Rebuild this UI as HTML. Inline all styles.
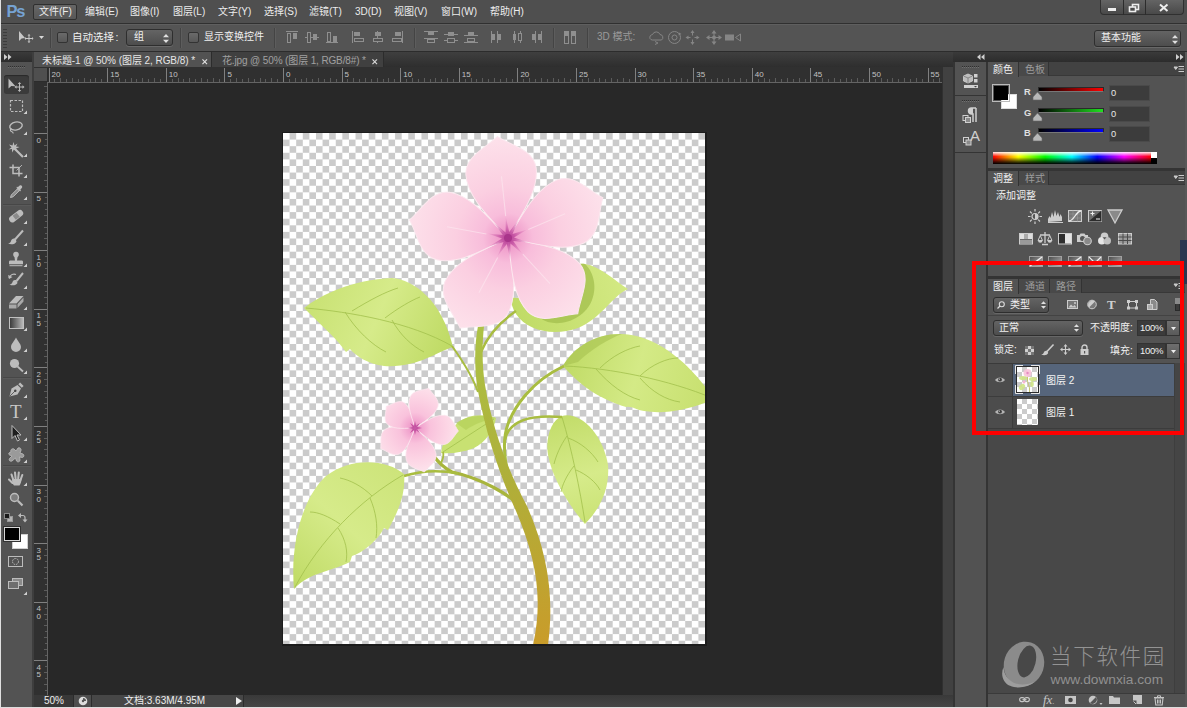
<!DOCTYPE html>
<html lang="zh-CN">
<head>
<meta charset="utf-8">
<title>Photoshop</title>
<style>
*{box-sizing:border-box;margin:0;padding:0}
html,body{width:1187px;height:708px;overflow:hidden;background:#535353}
body{position:relative;font-family:"Liberation Sans","Noto Sans CJK SC",sans-serif;font-size:10px;color:#e4e4e4;line-height:1}
.a{position:absolute}
.t{position:absolute;white-space:nowrap;line-height:12px;height:12px}
svg{position:absolute;overflow:visible}
#menubar{left:0;top:0;width:1187px;height:23px;background:#4f4f4f}
#menuline{left:0;top:23px;width:1187px;height:1px;background:#303030}
#optbar{left:0;top:24px;width:1187px;height:28px;background:#545454;border-top:1px solid #5f5f5f;border-bottom:1px solid #2c2c2c}
.menu{top:6px;font-size:10px;color:#ececec}
.dd{background:linear-gradient(#646464,#4d4d4d);border:1px solid #2e2e2e;border-radius:3px;box-shadow:0 1px 0 rgba(255,255,255,.12)}
.cb{width:11px;height:11px;background:linear-gradient(#6a6a6a,#585858);border:1px solid #333;border-radius:2px}
.vsep{width:2px;height:20px;top:28px;background:#444;border-right:1px solid #5d5d5d}
.dark{background:#3a3a3a}
</style>
</head>
<body>
<div class="a" id="menubar"></div><div class="a" id="menuline"></div>
<div class="t" style="left:6.500px;top:1px;font-size:16.500px;line-height:20px;height:20px;font-weight:bold;color:#76a3d3;letter-spacing:-1.200px">Ps</div>
<div class="a" style="left:33px;top:4px;width:44px;height:16px;background:linear-gradient(#666,#575757);border:1px solid #2f2f2f;border-radius:2px"></div>
<div class="t menu" style="left:39px">文件(F)</div>
<div class="t menu" style="left:85px">编辑(E)</div>
<div class="t menu" style="left:130px">图像(I)</div>
<div class="t menu" style="left:173px">图层(L)</div>
<div class="t menu" style="left:218px">文字(Y)</div>
<div class="t menu" style="left:264px">选择(S)</div>
<div class="t menu" style="left:309px">滤镜(T)</div>
<div class="t menu" style="left:355px">3D(D)</div>
<div class="t menu" style="left:394px">视图(V)</div>
<div class="t menu" style="left:441px">窗口(W)</div>
<div class="t menu" style="left:490px">帮助(H)</div>
<div class="a" style="left:1100px;top:0;width:84px;height:15px;background:linear-gradient(#646464,#494949);border:1px solid #303030;border-top:none;border-radius:0 0 4px 4px"></div>
<div class="a" style="left:1123px;top:0;width:1px;height:15px;background:#2c2c2c"></div>
<div class="a" style="left:1145px;top:0;width:1px;height:15px;background:#2c2c2c"></div>
<svg style="left:1100px;top:0" width="84" height="15" viewBox="0 0 84 15"><rect x="8" y="8" width="8" height="3" fill="#eee"/><rect x="32.5" y="4.5" width="6" height="5" fill="none" stroke="#eee" stroke-width="1.6"/><rect x="29.5" y="7" width="6" height="4.5" fill="#4b4b4b" stroke="#eee" stroke-width="1.6"/><path d="M60 4.5l7.5 6.5M67.5 4.5l-7.5 6.5" stroke="#eee" stroke-width="2"/></svg>
<div class="a" id="optbar"></div>
<div class="a" style="left:3px;top:29px;width:4px;height:19px;background:repeating-linear-gradient(#3c3c3c 0 1px,transparent 1px 3px)"></div>
<svg style="left:18px;top:31px" width="30" height="14" viewBox="0 0 30 14"><path d="M1 0v10l2.600-2.600L7 7z" fill="#c8c8c8"/><path d="M11 4v7M7.500 7.500h7" stroke="#c8c8c8" stroke-width="1"/><path d="M11 3l1.500 1.500h-3zM11 12l1.500-1.500h-3zM6.500 7.500L8 6v3zM15.500 7.500L14 6v3z" fill="#c8c8c8"/><path d="M21 5h5l-2.500 3z" fill="#d8d8d8"/></svg>
<div class="a vsep" style="left:50px"></div>
<div class="a cb" style="left:57px;top:32px"></div>
<div class="t" style="left:72px;top:31px;font-size:10.500px;color:#f0f0f0">自动选择<span style="margin-left:1.500px">:</span></div>
<div class="a dd" style="left:126px;top:29px;width:47px;height:17px"></div>
<div class="t" style="left:134px;top:31px;color:#f0f0f0">组</div>
<svg style="left:163px;top:34px" width="6" height="9" viewBox="0 0 6 9"><path d="M0 3.200L3 0l3 3.200zM0 5.800L3 9l3-3.200z" fill="#e0e0e0"/></svg>
<div class="a vsep" style="left:180px"></div>
<div class="a cb" style="left:188px;top:32px"></div>
<div class="t" style="left:204px;top:31px;color:#f0f0f0">显示变换控件</div>
<div class="a vsep" style="left:274px"></div>
<svg style="left:286px;top:31px" width="14" height="13" viewBox="0 0 14 13" shape-rendering="crispEdges"><path d="M0 .5h12" stroke="#8f8f8f"/><rect x="1.5" y="2.5" width="3" height="9" fill="none" stroke="#8f8f8f"/><rect x="7" y="2" width="4" height="6" fill="#8f8f8f"/></svg>
<svg style="left:305px;top:31px" width="14" height="13" viewBox="0 0 14 13" shape-rendering="crispEdges"><path d="M0 6h14" stroke="#8f8f8f"/><rect x="2.5" y="1.5" width="3" height="10" fill="#535353" stroke="#8f8f8f"/><rect x="8" y="3" width="4" height="6" fill="#8f8f8f"/></svg>
<svg style="left:326px;top:31px" width="14" height="13" viewBox="0 0 14 13" shape-rendering="crispEdges"><path d="M0 11.5h12" stroke="#8f8f8f"/><rect x="1.5" y="1.5" width="3" height="9" fill="none" stroke="#8f8f8f"/><rect x="7" y="5" width="4" height="6" fill="#8f8f8f"/></svg>
<svg style="left:352px;top:31px" width="14" height="13" viewBox="0 0 14 13" shape-rendering="crispEdges"><path d="M.5 0v12" stroke="#8f8f8f"/><rect x="2" y="1" width="6" height="4" fill="#8f8f8f"/><rect x="2.5" y="7.5" width="9" height="3" fill="none" stroke="#8f8f8f"/></svg>
<svg style="left:372px;top:31px" width="14" height="13" viewBox="0 0 14 13" shape-rendering="crispEdges"><path d="M5.5 0v12" stroke="#8f8f8f"/><rect x="2.5" y="1" width="6" height="4" fill="#8f8f8f"/><rect x="1" y="7.5" width="9" height="3" fill="#535353" stroke="#8f8f8f"/></svg>
<svg style="left:391px;top:31px" width="14" height="13" viewBox="0 0 14 13" shape-rendering="crispEdges"><path d="M11.5 0v12" stroke="#8f8f8f"/><rect x="4" y="1" width="6" height="4" fill="#8f8f8f"/><rect x="1.5" y="7.5" width="9" height="3" fill="none" stroke="#8f8f8f"/></svg>
<svg style="left:424px;top:31px" width="14" height="13" viewBox="0 0 14 13" shape-rendering="crispEdges"><path d="M0 .5h14M0 7.5h14" stroke="#8f8f8f"/><rect x="4" y="1" width="6" height="3" fill="#8f8f8f"/><rect x="3.5" y="8.500" width="7" height="3" fill="none" stroke="#8f8f8f"/></svg>
<svg style="left:444px;top:31px" width="14" height="13" viewBox="0 0 14 13" shape-rendering="crispEdges"><path d="M0 3h14M0 9.500h14" stroke="#8f8f8f"/><rect x="4" y="1" width="6" height="4" fill="#8f8f8f"/><rect x="3.5" y="7.5" width="7" height="4" fill="#535353" stroke="#8f8f8f"/></svg>
<svg style="left:464px;top:31px" width="14" height="13" viewBox="0 0 14 13" shape-rendering="crispEdges"><path d="M0 4.5h14M0 11.5h14" stroke="#8f8f8f"/><rect x="4" y="1" width="6" height="3" fill="#8f8f8f"/><rect x="3.5" y="7.5" width="7" height="3" fill="none" stroke="#8f8f8f"/></svg>
<svg style="left:491px;top:31px" width="14" height="13" viewBox="0 0 14 13" shape-rendering="crispEdges"><path d="M.5 0v12M6.500 0v12" stroke="#8f8f8f"/><rect x="1" y="3" width="3" height="6" fill="#8f8f8f"/><rect x="7" y="3" width="3" height="6" fill="#8f8f8f"/></svg>
<svg style="left:511px;top:31px" width="14" height="13" viewBox="0 0 14 13" shape-rendering="crispEdges"><path d="M3 0v12M9 0v12" stroke="#8f8f8f"/><rect x="1.500" y="3" width="3" height="6" fill="#8f8f8f"/><rect x="7.500" y="2.500" width="3" height="7" fill="#535353" stroke="#8f8f8f"/></svg>
<svg style="left:531px;top:31px" width="14" height="13" viewBox="0 0 14 13" shape-rendering="crispEdges"><path d="M4.500 0v12M10.500 0v12" stroke="#8f8f8f"/><rect x="1" y="3" width="3" height="6" fill="#8f8f8f"/><rect x="7" y="3" width="3" height="6" fill="#8f8f8f"/></svg>
<svg style="left:564px;top:31px" width="14" height="13" viewBox="0 0 14 13" shape-rendering="crispEdges"><rect x=".5" y=".5" width="4" height="12" fill="none" stroke="#8f8f8f"/><rect x="7.500" y=".5" width="4" height="12" fill="none" stroke="#8f8f8f"/><rect x="1" y="1" width="3" height="4" fill="#8f8f8f"/><rect x="8" y="1" width="3" height="4" fill="#8f8f8f"/></svg>
<div class="a vsep" style="left:414px"></div>
<div class="a vsep" style="left:553px"></div>
<div class="a vsep" style="left:587px"></div>
<div class="t" style="left:597px;top:31px;color:#9a9a9a">3D 模式:</div>
<svg style="left:648px;top:30px" width="96" height="15" viewBox="0 0 96 15" fill="none" stroke="#858585" stroke-width="1"><path d="M2 8.500a3 3 0 0 1 2.500-4a4 4 0 0 1 7.500 0a3 3 0 0 1 1.500 5.500h-9a3 3 0 0 1-2.500-1.500z"/><path d="M7 11.500l3 1.500-3 1.500"/><circle cx="26.500" cy="7.500" r="6"/><circle cx="26.500" cy="7.500" r="2.500"/><path d="M31 2.500l2.500 1.500-3 1.500z" fill="#858585" stroke="none"/><path d="M44.500 2.500v3M44.500 9.500v3M39.500 7.500h3M46.500 7.500h3" /><path d="M44.500 0l2 3h-4zM44.500 15l2-3h-4zM37.500 7.500l3-2v4zM51.500 7.500l-3-2v4z" fill="#858585" stroke="none"/><path d="M66 2v11M60 7.500h12"/><path d="M66 0l2.500 3.500h-5zM66 15l2.500-3.500h-5zM58 7.500l3.500-2.500v5zM74 7.500l-3.500-2.500v5z" fill="#858585" stroke="none"/><circle cx="66" cy="7.500" r="2" fill="#858585" stroke="none"/><rect x="77" y="4.500" width="9" height="6" fill="#858585" stroke="none"/><path d="M87.500 7.500l5-3.500v7z"/></svg>
<div class="a dd" style="left:1094px;top:30px;width:87px;height:17px"></div>
<div class="t" style="left:1101px;top:32px;color:#f0f0f0">基本功能</div>
<svg style="left:1172px;top:35px" width="6" height="9" viewBox="0 0 6 9"><path d="M0 3.200L3 0l3 3.200zM0 5.800L3 9l3-3.200z" fill="#e0e0e0"/></svg>
<div class="a" style="left:34px;top:52px;width:919px;height:15px;background:linear-gradient(#3f3f3f,#2e2e2e)"></div>
<div class="a" style="left:34px;top:52px;width:178px;height:16px;background:#525252;border-right:1px solid #2c2c2c"></div>
<div class="a" style="left:212px;top:52px;width:172px;height:15px;background:#404040;border-right:1px solid #2c2c2c"></div>
<div class="t" style="left:42px;top:55px;font-size:10px;letter-spacing:-.06px;color:#e6e6e6">未标题-1 @ 50% (图层 2, RGB/8) *</div>
<div class="t" style="left:222px;top:55px;font-size:10px;letter-spacing:-.13px;color:#a0a0a0">花.jpg @ 50% (图层 1, RGB/8#) *</div>
<svg style="left:202px;top:58.500px" width="5.500" height="5.500" viewBox="0 0 6 6"><path d="M.5.5l5 5M5.500.5l-5 5" stroke="#e0e0e0" stroke-width="1.250"/></svg>
<svg style="left:372px;top:58.500px" width="5.500" height="5.500" viewBox="0 0 6 6"><path d="M.5.5l5 5M5.500.5l-5 5" stroke="#d8d8d8" stroke-width="1.250"/></svg>
<div class="a" style="left:48px;top:82px;width:894px;height:613px;background:#282828"></div>
<div class="a" style="left:942px;top:67px;width:11px;height:641px;background:#414141;border-left:1px solid #303030"></div>
<svg style="left:0;top:0" width="1187" height="708" viewBox="0 0 1187 708">
<defs>
<pattern id="chk" x="283" y="133" width="13.1875" height="13.1875" patternUnits="userSpaceOnUse"><rect width="13.1875" height="13.1875" fill="#fff"/><rect x="6.59" width="6.6" height="6.59" fill="#cbcbcb"/><rect y="6.59" width="6.59" height="6.6" fill="#cbcbcb"/></pattern>
<clipPath id="cv"><rect x="283" y="133" width="422" height="511"/></clipPath>
<radialGradient id="pg" gradientUnits="userSpaceOnUse" cx="0" cy="0" r="104"><stop offset="0" stop-color="#d970b4"/><stop offset=".08" stop-color="#ef9bca"/><stop offset=".24" stop-color="#f8bddb"/><stop offset=".5" stop-color="#fbcfe1"/><stop offset="1" stop-color="#fde2eb"/></radialGradient>
<radialGradient id="pg2" gradientUnits="userSpaceOnUse" cx="0" cy="0" r="44"><stop offset="0" stop-color="#dc78b8"/><stop offset=".12" stop-color="#f09fcc"/><stop offset=".35" stop-color="#f9c2dc"/><stop offset=".7" stop-color="#fcd4e4"/><stop offset="1" stop-color="#fde3ec"/></radialGradient>
<radialGradient id="star" gradientUnits="userSpaceOnUse" cx="508" cy="238" r="21"><stop offset="0" stop-color="#b03a92"/><stop offset=".35" stop-color="#c655a4" stop-opacity=".9"/><stop offset="1" stop-color="#e58cc2" stop-opacity=".25"/></radialGradient>
<linearGradient id="stem" gradientUnits="userSpaceOnUse" x1="0" y1="330" x2="0" y2="644"><stop offset="0" stop-color="#adc246"/><stop offset=".45" stop-color="#aeb03a"/><stop offset="1" stop-color="#c99c2a"/></linearGradient>
<linearGradient id="lf1" gradientUnits="userSpaceOnUse" x1="304" y1="300" x2="440" y2="360"><stop offset="0" stop-color="#c8e172"/><stop offset=".5" stop-color="#d6eb8a"/><stop offset="1" stop-color="#c0db66"/></linearGradient>
<linearGradient id="lf2" gradientUnits="userSpaceOnUse" x1="515" y1="320" x2="625" y2="285"><stop offset="0" stop-color="#c0db66"/><stop offset="1" stop-color="#d3e983"/></linearGradient>
<linearGradient id="lf3" gradientUnits="userSpaceOnUse" x1="565" y1="360" x2="705" y2="400"><stop offset="0" stop-color="#c0db66"/><stop offset=".5" stop-color="#d4ea86"/><stop offset="1" stop-color="#c8e070"/></linearGradient>
<linearGradient id="lf4" gradientUnits="userSpaceOnUse" x1="560" y1="415" x2="590" y2="520"><stop offset="0" stop-color="#c2dc69"/><stop offset=".6" stop-color="#d6eb8a"/><stop offset="1" stop-color="#cbe376"/></linearGradient>
<linearGradient id="lf6" gradientUnits="userSpaceOnUse" x1="400" y1="470" x2="295" y2="585"><stop offset="0" stop-color="#cde47a"/><stop offset=".5" stop-color="#d6eb8a"/><stop offset="1" stop-color="#c0db66"/></linearGradient>
</defs>
<rect x="282" y="132" width="425" height="514" fill="#1c1c1c"/>
<rect x="283" y="133" width="422" height="511" fill="url(#chk)" shape-rendering="crispEdges"/>
<g clip-path="url(#cv)">
<path d="M511,299 C514,296 518,300 524,296 C536,280 560,262 585,264 C600,266 615,281 628,289 C612,296 602,318 578,328 C555,336 528,332 516,314 C513,309 511,304 511,299Z" fill="url(#lf2)"/>
<path d="M540,318 C556,330 585,320 592,300 C598,285 592,270 585,264 C570,262 552,276 540,290Z" fill="#a3bf4e" opacity=".75"/>
<path d="M304,308 C322,294 352,280 392,278 C414,280 442,300 453,347 C436,352 418,368 384,366 C368,364 356,356 350,349 L346,352 C338,340 322,326 304,308Z" fill="url(#lf1)"/>
<path d="M306,308 C350,312 410,322 452,346 M352,311 C370,300 385,292 398,288 M385,318 C398,308 412,300 420,297 M345,312 C356,330 372,345 386,352 M392,320 C400,335 412,346 424,352" stroke="#a2c04c" stroke-width="1" fill="none" opacity=".8"/>
<path d="M563,366 C574,346 598,333 622,334 C660,336 692,366 714,399 C694,408 668,415 644,411 C636,410 632,406 626,407 C604,400 584,390 563,366Z" fill="url(#lf3)"/>
<path d="M563,366 C574,346 598,333 622,334 C610,338 590,350 578,362Z" fill="#a6c250" opacity=".6"/>
<path d="M565,366 C610,368 670,380 712,398 M600,368 C612,356 628,348 640,346 M640,376 C652,364 668,358 678,358 M596,369 C610,385 625,396 640,400 M640,378 C652,392 666,400 680,402" stroke="#a2c04c" stroke-width="1" fill="none" opacity=".8"/>
<path d="M562,416 C580,411 603,434 608,465 C610,490 599,510 585,524 C574,512 553,482 548,455 C545,436 552,420 562,416Z" fill="url(#lf4)"/>
<path d="M562,417 C572,450 580,490 585,522 M567,436 C560,446 556,456 554,464 M574,466 C566,476 562,486 561,492 M568,438 C580,442 592,452 598,462 M576,470 C586,474 596,482 600,490" stroke="#a2c04c" stroke-width="1" fill="none" opacity=".8"/>
<path d="M441,453 C443,438 452,424 466,418 C476,414 488,415 496,418 C494,430 486,442 474,448 C464,452 452,454 441,453Z" fill="#c8e172"/><path d="M456,423 C466,416 482,414 496,418 C486,420 474,424 466,430Z" fill="#b3d058" opacity=".7"/>
<path d="M443,452 C460,441 478,429 494,419" stroke="#a2c04c" stroke-width="1" fill="none" opacity=".8"/>
<path d="M404,474 C388,460 352,456 326,476 C302,498 290,545 294,589 C310,572 330,572 350,562 L352,556 C364,552 378,540 384,528 L388,530 C398,512 406,494 404,474Z" fill="url(#lf6)"/>
<path d="M403,475 C360,500 320,540 295,587 M372,496 C362,486 350,480 340,478 M340,524 C328,516 318,512 310,512 M370,498 C376,512 378,526 376,538 M338,528 C346,540 348,552 346,562" stroke="#a2c04c" stroke-width="1" fill="none" opacity=".8"/>
<path d="M510,482 C504,460 502,440 508,424 C514,408 530,382 564,366" stroke="#a9bd40" stroke-width="3" fill="none"/>
<path d="M505,440 C508,424 524,414 562,417" stroke="#a9bd40" stroke-width="2.500" fill="none"/>
<path d="M524,510 C510,494 480,478 452,472 C444,468 438,462 433,455" stroke="#a8b53c" stroke-width="3.200" fill="none"/>
<path d="M458,473.500 C440,470 420,471 404,476" stroke="#a9bd40" stroke-width="2.500" fill="none"/>
<path d="M441,463 C443,459 444,455 443,452" stroke="#a9bd40" stroke-width="1.800" fill="none"/>
<path d="M481,352 C488,335 500,322 516,311" stroke="#a9bd40" stroke-width="2.500" fill="none"/>
<path d="M452,346 C462,360 472,375 478,392" stroke="#a9bd40" stroke-width="2" fill="none"/>
<path d="M533,645 C543,600 537,560 516,511 C501,478 486,436 477,386 C474,362 475,342 478,326 L484,326 C482,345 482,366 485,385 C493,432 509,472 527,506 C549,556 554,600 548,645Z" fill="url(#stem)"/>
<path transform="translate(508,238) rotate(-152)" d="M0,0 C-12.6,-18.4 -36.0,-42.8 -35.3,-67.3 C-34.2,-85.7 -12.6,-91.8 0,-102.0 C12.6,-91.8 34.2,-85.7 35.3,-67.3 C36.0,-42.8 12.6,-18.4 0,0Z" fill="url(#pg)" stroke="#fce8ef" stroke-width="1"/>
<path transform="translate(508,238) rotate(137.4)" d="M0,0 C-12.6,-18.5 -36.0,-43.3 -35.3,-68.0 C-34.2,-86.5 -12.6,-92.7 0,-103.0 C12.6,-92.7 34.2,-86.5 35.3,-68.0 C36.0,-43.3 12.6,-18.5 0,0Z" fill="url(#pg)" stroke="#fce8ef" stroke-width="1"/>
<path transform="translate(508,238) rotate(-79.6)" d="M0,0 C-12.2,-18.0 -35.0,-42.0 -34.3,-66.0 C-33.2,-84.0 -12.2,-90.0 0,-100.0 C12.2,-90.0 33.2,-84.0 34.3,-66.0 C35.0,-42.0 12.2,-18.0 0,0Z" fill="url(#pg)" stroke="#fce8ef" stroke-width="1"/>
<path transform="translate(508,238) rotate(67)" d="M0,0 C-12.2,-18.5 -35.0,-43.3 -34.3,-68.0 C-33.2,-86.5 -12.2,-92.7 0,-103.0 C12.2,-92.7 33.2,-86.5 34.3,-68.0 C35.0,-43.3 12.2,-18.5 0,0Z" fill="url(#pg)" stroke="#fce8ef" stroke-width="1"/>
<path transform="translate(508,238) rotate(-6)" d="M0,0 C-12.6,-18.4 -36.0,-42.8 -35.3,-67.3 C-34.2,-85.7 -12.6,-91.8 0,-102.0 C12.6,-91.8 34.2,-85.7 35.3,-67.3 C36.0,-42.8 12.6,-18.4 0,0Z" fill="url(#pg)" stroke="#fce8ef" stroke-width="1"/>
<path d="M497.7,257.4L478.9,292.7" stroke="#fdeaf1" stroke-width="1.100" opacity=".6"/>
<path d="M522.9,254.2L550.0,283.6" stroke="#fdeaf1" stroke-width="1.100" opacity=".6"/>
<path d="M486.4,234.0L447.0,226.8" stroke="#fdeaf1" stroke-width="1.100" opacity=".6"/>
<path d="M528.3,229.4L565.1,213.8" stroke="#fdeaf1" stroke-width="1.100" opacity=".6"/>
<path d="M505.7,216.1L501.5,176.3" stroke="#fdeaf1" stroke-width="1.100" opacity=".6"/>
<polygon points="505.8,217.1 509.2,232.1 518.5,219.8 512.5,234.0 527.2,229.5 514.0,237.4 528.5,242.4 513.2,241.0 522.1,253.6 510.4,243.5 510.2,258.9 506.8,243.9 497.5,256.2 503.5,242.0 488.8,246.5 502.0,238.6 487.5,233.6 502.8,235.0 493.9,222.4 505.6,232.5" fill="url(#star)"/>
<circle cx="508" cy="238" r="4" fill="#a9358b"/>
<path transform="translate(415,428) rotate(168)" d="M0,0 C-5.4,-8.1 -15.5,-18.9 -15.2,-29.7 C-14.7,-37.8 -5.4,-40.5 0,-45.0 C5.4,-40.5 14.7,-37.8 15.2,-29.7 C15.5,-18.9 5.4,-8.1 0,0Z" fill="url(#pg2)" stroke="#fce8ef" stroke-width=".7"/>
<path transform="translate(415,428) rotate(239)" d="M0,0 C-5.1,-7.2 -14.5,-16.8 -14.2,-26.4 C-13.8,-33.6 -5.1,-36.0 0,-40.0 C5.1,-36.0 13.8,-33.6 14.2,-26.4 C14.5,-16.8 5.1,-7.2 0,0Z" fill="url(#pg2)" stroke="#fce8ef" stroke-width=".7"/>
<path transform="translate(415,428) rotate(307)" d="M0,0 C-4.9,-6.5 -14.0,-15.1 -13.7,-23.8 C-13.3,-30.2 -4.9,-32.4 0,-36.0 C4.9,-32.4 13.3,-30.2 13.7,-23.8 C14.0,-15.1 4.9,-6.5 0,0Z" fill="url(#pg2)" stroke="#fce8ef" stroke-width=".7"/>
<path transform="translate(415,428) rotate(94)" d="M0,0 C-5.2,-7.8 -15.0,-18.3 -14.7,-28.7 C-14.2,-36.5 -5.2,-39.1 0,-43.5 C5.2,-39.1 14.2,-36.5 14.7,-28.7 C15.0,-18.3 5.2,-7.8 0,0Z" fill="url(#pg2)" stroke="#fce8ef" stroke-width=".7"/>
<path transform="translate(415,428) rotate(19)" d="M0,0 C-5.2,-7.6 -15.0,-17.6 -14.7,-27.7 C-14.2,-35.3 -5.2,-37.8 0,-42.0 C5.2,-37.8 14.2,-35.3 14.7,-27.7 C15.0,-17.6 5.2,-7.6 0,0Z" fill="url(#pg2)" stroke="#fce8ef" stroke-width=".7"/>
<polygon points="415.0,421.0 416.0,425.7 419.9,423.1 417.3,427.0 422.0,428.0 417.3,429.0 419.9,432.9 416.0,430.3 415.0,435.0 414.0,430.3 410.1,432.9 412.7,429.0 408.0,428.0 412.7,427.0 410.1,423.1 414.0,425.7" fill="#c04a9c" opacity=".9"/>
</g></svg>
<div class="a" style="left:34px;top:67px;width:908px;height:15px;background:#303030"></div>
<div class="a" style="left:34px;top:82px;width:14px;height:613px;background:#303030"></div>
<div class="a" style="left:34px;top:68px;width:14px;height:14px;background:#4f4f4f;border-right:1px solid #2c2c2c;border-bottom:1px solid #2c2c2c"></div>
<div class="a" style="left:48px;top:82px;width:894px;height:1px;background:#646464"></div><div class="a" style="left:47px;top:82px;width:1px;height:613px;background:#646464"></div>
<svg style="left:0;top:0" width="1187" height="708" viewBox="0 0 1187 708" shape-rendering="crispEdges" font-family="Liberation Sans, sans-serif" font-size="8" fill="#c2c2c2"><path d="M54.5 79V82 M60.5 78V82 M66.5 79V82 M72.5 78V82 M78.5 79V82 M84.5 78V82 M90.5 79V82 M95.5 78V82 M101.5 79V82 M113.5 79V82 M119.5 78V82 M125.5 79V82 M131.5 78V82 M136.5 79V82 M142.5 78V82 M148.5 79V82 M154.5 78V82 M160.5 79V82 M172.5 79V82 M178.5 78V82 M183.5 79V82 M189.5 78V82 M195.5 79V82 M201.5 78V82 M207.5 79V82 M213.5 78V82 M219.5 79V82 M230.5 79V82 M236.5 78V82 M242.5 79V82 M248.5 78V82 M254.5 79V82 M260.5 78V82 M265.5 79V82 M271.5 78V82 M277.5 79V82 M289.5 79V82 M295.5 78V82 M301.5 79V82 M306.5 78V82 M312.5 79V82 M318.5 78V82 M324.5 79V82 M330.5 78V82 M336.5 79V82 M347.5 79V82 M353.5 78V82 M359.5 79V82 M365.5 78V82 M371.5 79V82 M377.5 78V82 M383.5 79V82 M388.5 78V82 M394.5 79V82 M406.5 79V82 M412.5 78V82 M418.5 79V82 M424.5 78V82 M430.5 79V82 M435.5 78V82 M441.5 79V82 M447.5 78V82 M453.5 79V82 M465.5 79V82 M471.5 78V82 M476.5 79V82 M482.5 78V82 M488.5 79V82 M494.5 78V82 M500.5 79V82 M506.5 78V82 M512.5 79V82 M523.5 79V82 M529.5 78V82 M535.5 79V82 M541.5 78V82 M547.5 79V82 M553.5 78V82 M558.5 79V82 M564.5 78V82 M570.5 79V82 M582.5 79V82 M588.5 78V82 M594.5 79V82 M599.5 78V82 M605.5 79V82 M611.5 78V82 M617.5 79V82 M623.5 78V82 M629.5 79V82 M640.5 79V82 M646.5 78V82 M652.5 79V82 M658.5 78V82 M664.5 79V82 M670.5 78V82 M676.5 79V82 M681.5 78V82 M687.5 79V82 M699.5 79V82 M705.5 78V82 M711.5 79V82 M717.5 78V82 M722.5 79V82 M728.5 78V82 M734.5 79V82 M740.5 78V82 M746.5 79V82 M758.5 79V82 M764.5 78V82 M769.5 79V82 M775.5 78V82 M781.5 79V82 M787.5 78V82 M793.5 79V82 M799.5 78V82 M805.5 79V82 M816.5 79V82 M822.5 78V82 M828.5 79V82 M834.5 78V82 M840.5 79V82 M846.5 78V82 M851.5 79V82 M857.5 78V82 M863.5 79V82 M875.5 79V82 M881.5 78V82 M887.5 79V82 M892.5 78V82 M898.5 79V82 M904.5 78V82 M910.5 79V82 M916.5 78V82 M922.5 79V82 M933.5 79V82 M939.5 78V82 M44 86.5H47 M45 92.5H47 M44 98.5H47 M45 104.5H47 M44 110.5H47 M45 115.5H47 M44 121.5H47 M45 127.5H47 M45 139.5H47 M44 145.5H47 M45 151.5H47 M44 156.5H47 M45 162.5H47 M44 168.5H47 M45 174.5H47 M44 180.5H47 M45 186.5H47 M45 197.5H47 M44 203.5H47 M45 209.5H47 M44 215.5H47 M45 221.5H47 M44 227.5H47 M45 233.5H47 M44 238.5H47 M45 244.5H47 M45 256.5H47 M44 262.5H47 M45 268.5H47 M44 274.5H47 M45 280.5H47 M44 285.5H47 M45 291.5H47 M44 297.5H47 M45 303.5H47 M45 315.5H47 M44 321.5H47 M45 326.5H47 M44 332.5H47 M45 338.5H47 M44 344.5H47 M45 350.5H47 M44 356.5H47 M45 362.5H47 M45 373.5H47 M44 379.5H47 M45 385.5H47 M44 391.5H47 M45 397.5H47 M44 403.5H47 M45 408.5H47 M44 414.5H47 M45 420.5H47 M45 432.5H47 M44 438.5H47 M45 444.5H47 M44 449.5H47 M45 455.5H47 M44 461.5H47 M45 467.5H47 M44 473.5H47 M45 479.5H47 M45 490.5H47 M44 496.5H47 M45 502.5H47 M44 508.5H47 M45 514.5H47 M44 520.5H47 M45 526.5H47 M44 531.5H47 M45 537.5H47 M45 549.5H47 M44 555.5H47 M45 561.5H47 M44 567.5H47 M45 572.5H47 M44 578.5H47 M45 584.5H47 M44 590.5H47 M45 596.5H47 M45 608.5H47 M44 614.5H47 M45 619.5H47 M44 625.5H47 M45 631.5H47 M44 637.5H47 M45 643.5H47 M44 649.5H47 M45 655.5H47 M45 666.5H47 M44 672.5H47 M45 678.5H47 M44 684.5H47 M45 690.5H47" stroke="#5c5c5c" stroke-width="1" fill="none"/><path d="M49.5 68V82 M107.5 68V82 M166.5 68V82 M224.5 68V82 M283.5 68V82 M342.5 68V82 M400.5 68V82 M459.5 68V82 M517.5 68V82 M576.5 68V82 M635.5 68V82 M693.5 68V82 M752.5 68V82 M810.5 68V82 M869.5 68V82 M928.5 68V82 M34 133.5H47 M34 192.5H47 M34 250.5H47 M34 309.5H47 M34 367.5H47 M34 426.5H47 M34 485.5H47 M34 543.5H47 M34 602.5H47 M34 660.5H47" stroke="#808080" stroke-width="1" fill="none"/><text x="51.6" y="76.500" shape-rendering="auto">20</text><text x="110.2" y="76.500" shape-rendering="auto">15</text><text x="168.8" y="76.500" shape-rendering="auto">10</text><text x="227.4" y="76.500" shape-rendering="auto">5</text><text x="286.0" y="76.500" shape-rendering="auto">0</text><text x="344.6" y="76.500" shape-rendering="auto">5</text><text x="403.2" y="76.500" shape-rendering="auto">10</text><text x="461.8" y="76.500" shape-rendering="auto">15</text><text x="520.4" y="76.500" shape-rendering="auto">20</text><text x="579.0" y="76.500" shape-rendering="auto">25</text><text x="637.6" y="76.500" shape-rendering="auto">30</text><text x="696.2" y="76.500" shape-rendering="auto">35</text><text x="754.8" y="76.500" shape-rendering="auto">40</text><text x="813.4" y="76.500" shape-rendering="auto">45</text><text x="872.0" y="76.500" shape-rendering="auto">50</text><text x="930.6" y="76.500" shape-rendering="auto">55</text><text x="36.500" y="142.5" shape-rendering="auto">0</text><text x="36.500" y="201.1" shape-rendering="auto">5</text><text x="36.500" y="259.7" shape-rendering="auto">1</text><text x="36.500" y="267.2" shape-rendering="auto">0</text><text x="36.500" y="318.3" shape-rendering="auto">1</text><text x="36.500" y="325.8" shape-rendering="auto">5</text><text x="36.500" y="376.9" shape-rendering="auto">2</text><text x="36.500" y="384.4" shape-rendering="auto">0</text><text x="36.500" y="435.5" shape-rendering="auto">2</text><text x="36.500" y="443.0" shape-rendering="auto">5</text><text x="36.500" y="494.1" shape-rendering="auto">3</text><text x="36.500" y="501.6" shape-rendering="auto">0</text><text x="36.500" y="552.7" shape-rendering="auto">3</text><text x="36.500" y="560.2" shape-rendering="auto">5</text><text x="36.500" y="611.3" shape-rendering="auto">4</text><text x="36.500" y="618.8" shape-rendering="auto">0</text><text x="36.500" y="669.9" shape-rendering="auto">4</text><text x="36.500" y="677.4" shape-rendering="auto">5</text></svg>
<div class="a" style="left:34px;top:695px;width:919px;height:13px;background:linear-gradient(#393939,#464646)"></div>
<div class="a" style="left:34px;top:695px;width:39px;height:12px;background:#383838"></div>
<div class="a" style="left:73px;top:695px;width:19px;height:12px;background:#4e4e4e;border-left:1px solid #2c2c2c;border-right:1px solid #2c2c2c"></div>
<div class="a" style="left:92px;top:695px;width:152px;height:12px;background:#474747;border-right:1px solid #2c2c2c"></div>
<div class="t" style="left:44px;top:695px;font-size:10px;color:#eee">50%</div>
<svg style="left:78px;top:696px" width="10" height="10" viewBox="0 0 10 10"><circle cx="5" cy="5" r="4.300" fill="#ddd"/><path d="M5 5V2A3 3 0 0 1 8 5z" fill="#555"/><circle cx="5" cy="5" r="1.200" fill="#555"/></svg>
<div class="t" style="left:124px;top:695px;font-size:10px;color:#eee">文档:3.63M/4.95M</div>
<svg style="left:236px;top:697px" width="6" height="8" viewBox="0 0 6 8"><path d="M0 0l6 4-6 4z" fill="#eee"/></svg>
<div class="a" style="left:1px;top:52px;width:33px;height:10px;background:linear-gradient(#3a3a3a,#2c2c2c)"></div>
<div class="a" style="left:1px;top:62px;width:31px;height:646px;background:#535353"></div><div class="a" style="left:32px;top:52px;width:2px;height:656px;background:#3e3e3e"></div>

<svg style="left:4px;top:54px" width="8" height="6" viewBox="0 0 8 6"><path d="M0 0l3.500 3L0 6zM4 0l3.500 3L4 6z" fill="#d0d0d0"/></svg>
<div class="a" style="left:8px;top:66px;width:17px;height:1px;background:repeating-linear-gradient(90deg,#2e2e2e 0 1px,transparent 1px 2px)"></div>
<div class="a" style="left:8px;top:67px;width:17px;height:1px;background:repeating-linear-gradient(90deg,#6a6a6a 0 1px,transparent 1px 2px)"></div>
<div class="a" style="left:4px;top:75px;width:25px;height:19px;background:#3b3b3b;border-radius:3px;box-shadow:inset 0 1px 1px #2a2a2a"></div>
<div class="a" style="left:3px;top:204px;width:28px;height:1px;background:#474747"></div>
<div class="a" style="left:3px;top:205px;width:28px;height:1px;background:#5a5a5a"></div>
<div class="a" style="left:3px;top:377px;width:28px;height:1px;background:#474747"></div>
<div class="a" style="left:3px;top:378px;width:28px;height:1px;background:#5a5a5a"></div>
<div class="a" style="left:3px;top:465px;width:28px;height:1px;background:#474747"></div>
<div class="a" style="left:3px;top:466px;width:28px;height:1px;background:#5a5a5a"></div>
<div class="a" style="left:9px;top:317px;width:15px;height:12px;border:1px solid #c0c0c0;background:linear-gradient(90deg,#3c3c3c,#b8b8b8)"></div>
<div class="a" style="left:7px;top:516px;width:6px;height:6px;background:#b4b4b4;border:1px solid #999"></div>
<div class="a" style="left:4px;top:513px;width:6px;height:6px;background:#1a1a1a;border:1px solid #8a8a8a"></div>
<div class="a" style="left:12px;top:534px;width:16px;height:15px;background:#fff;border:1px solid #d0d0d0"></div>
<div class="a" style="left:4px;top:527px;width:16px;height:14px;background:#000;border:1px solid #d8d8d8;box-shadow:0 0 0 1px #333"></div>
<svg style="left:0;top:0" width="34" height="708" viewBox="0 0 34 708"><g transform="translate(7,77)"><path d="M1.500 1.500v10l2.800-2.600 4.200.3z" fill="#bcbcbc"/><path d="M12.500 6.500v7M9 10h7" stroke="#bcbcbc"/><path d="M12.500 5l1.700 2h-3.400zM12.500 15l1.700-2h-3.400zM7.500 10l2-1.700v3.400zM17.500 10l-2-1.700v3.400z" fill="#bcbcbc"/></g><g transform="translate(8,98)"><rect x="2.500" y="2.500" width="12" height="11" fill="none" stroke="#bcbcbc" stroke-width="1.200" stroke-dasharray="2.500 1.500"/></g><g transform="translate(8,119.5)"><ellipse cx="8" cy="6.500" rx="6.300" ry="4" fill="none" stroke="#bcbcbc" stroke-width="1.400" transform="rotate(-12 8 6.500)"/><path d="M3.500 9c-1.500.8-1.500 2.500 0 3c1.200.4 1.800 1 1.500 2" fill="none" stroke="#bcbcbc" stroke-width="1.200"/></g><g transform="translate(8,142)"><path d="M6.500 6.500L15 15" stroke="#bcbcbc" stroke-width="2.200"/><path d="M5.500 0l1 3.500 3-2-1.500 3 3.500.5-3.500 1.500 1 3-3-2-2 3v-3.500l-3.500.5 3-2-2.500-3 3.500 1z" fill="#bcbcbc"/></g><g transform="translate(8,162)"><path d="M5 2.500v9h9.500M1.500 5.500h9.500v9" fill="none" stroke="#bcbcbc" stroke-width="1.500"/><path d="M8.500 8.500l5.500-5.500" stroke="#bcbcbc" stroke-width=".9"/></g><g transform="translate(8,184)"><path d="M2.500 13.500l.8-2.500 6-6 1.800 1.800-6 6z" fill="#8c8c8c" stroke="#bcbcbc" stroke-width="1"/><path d="M8.500 4l3.500 3.500 1-1-.7-.7 1.700-2c1-1.500-1-3.300-2.300-2.300l-2 1.700-.7-.7z" fill="#bcbcbc"/></g><g transform="translate(8,208)"><rect x="0" y="5" width="16" height="6.500" rx="3.200" fill="#bcbcbc" transform="rotate(-38 8 8)"/><rect x="5.500" y="5.800" width="5" height="5" fill="#8a8a8a" transform="rotate(-38 8 8)"/></g><g transform="translate(8,229.5)"><path d="M15 1L7 10" stroke="#bcbcbc" stroke-width="2"/><path d="M7.500 9.500c-2-1-4 0-4.500 2c-.3 1.500-1.500 2.500-3 2.500c3 1.500 7 1 8.500-2z" fill="#bcbcbc"/></g><g transform="translate(8,251)"><circle cx="8" cy="3.500" r="2.800" fill="#bcbcbc"/><path d="M6.300 5l.7 4.500H2.500c-1 0-1.500.5-1.500 1.500v2.200h14V11c0-1-.5-1.500-1.500-1.500H9L9.700 5z" fill="#bcbcbc"/><rect x="1.500" y="14.200" width="13" height="1" fill="#bcbcbc"/></g><g transform="translate(8,272)"><path d="M15 1L8.500 9" stroke="#bcbcbc" stroke-width="2"/><path d="M8.500 8.500c-2-1-3.500 0-4 1.500c-.3 1.500-1.500 2.500-3 2.500c3 1.500 6.500 1 8-1.500z" fill="#bcbcbc"/><path d="M1 6c1-3 4-4.500 7-3.500" fill="none" stroke="#bcbcbc" stroke-width="1.200"/><path d="M0 3l1 4 3.500-2z" fill="#bcbcbc"/></g><g transform="translate(8,293.5)"><path d="M1 10l7-7.500h7.500L8.500 10z" fill="#bcbcbc"/><path d="M1 11h7.500v4H1zM9.500 10.500l6-6.500v4l-6 6.500z" fill="#a8a8a8"/></g><g transform="translate(8,336.5)"><path d="M8 1c2 4 5 6.500 5 9.500a5 5 0 0 1-10 0C3 7.500 6 5 8 1z" fill="#bcbcbc"/></g><g transform="translate(8,357.5)"><circle cx="6.500" cy="6" r="4.600" fill="#bcbcbc"/><path d="M9.500 9l5.500 5" stroke="#bcbcbc" stroke-width="1.800"/></g><g transform="translate(8,382)"><path d="M1.500 14.500l2-8 6-3.500 3.500 3.500-3.500 6z" fill="#bcbcbc"/><path d="M2 14l5-5" stroke="#555" stroke-width=".9"/><circle cx="7.300" cy="8.700" r="1.200" fill="#444"/><path d="M10.300 2.200l1.800-1.800 3.500 3.500-1.800 1.800z" fill="#bcbcbc"/></g><g transform="translate(8,425.5)"><path d="M4 0v13l3-3 2.500 5.500 2-1L9 9.500h4z" fill="#1e1e1e" stroke="#bcbcbc" stroke-width="1"/></g><g transform="translate(8,447)"><path d="M3 5c-1-2 1-4 3-3l2 2 2-3c2-1 3.500 1 3 2.500L12 6l3 1c1.500 1 1 3-.5 3.500L11.500 10l.5 3c0 2-2.500 2.500-3.500 1L7.500 11 4 14c-2 1-3.500-1-2.500-2.500L4 9 1.500 8c-1-.5-1-2 0-2.500z" fill="#9a9a9a" stroke="#bcbcbc" stroke-width=".8"/></g><g transform="translate(8,470.5)"><path d="M5.200 9L3.500 4M7.600 8L7 2M10.200 8l.6-6M12.500 9.500l1.800-5M4.500 12.500L1 9" stroke="#bcbcbc" stroke-width="2.100" stroke-linecap="round" fill="none"/><path d="M4 8.500h9.500c0 3-1 5-2 6.500H6C4.500 13.500 4 11 4 8.500z" fill="#bcbcbc"/></g><g transform="translate(8,491.5)"><circle cx="6.500" cy="6" r="4" fill="#7d7d7d" stroke="#bcbcbc" stroke-width="1.400"/><path d="M9.800 9.300L14.500 14" stroke="#bcbcbc" stroke-width="2.200"/></g><g transform="translate(18,512)"><path d="M2 3.500h3a2 2 0 0 1 2 2V8" fill="none" stroke="#bcbcbc" stroke-width="1.200"/><path d="M0 3.500l3-2.500v5zM7 10.500l-2.500-3h5z" fill="#bcbcbc"/></g><g transform="translate(8,556)"><rect x=".5" y=".5" width="14" height="10" fill="none" stroke="#bcbcbc"/><circle cx="7.500" cy="5.500" r="3" fill="none" stroke="#bcbcbc" stroke-dasharray="1.500 1"/></g><g transform="translate(8,578)"><rect x="4.500" y=".5" width="10" height="7" fill="#8a8a8a" stroke="#bcbcbc"/><rect x=".5" y="3.500" width="10" height="7" fill="#6e6e6e" stroke="#bcbcbc"/></g><path d="M27 110.5v3.500h-3.500zM27 131.5v3.500h-3.500zM27 153.5v3.500h-3.500zM27 174.5v3.500h-3.500zM27 196.5v3.500h-3.500zM27 220.5v3.500h-3.500zM27 242.5v3.500h-3.500zM27 263.5v3.500h-3.500zM27 285.5v3.500h-3.500zM27 306.5v3.500h-3.500zM27 327.5v3.500h-3.500zM27 348.5v3.500h-3.500zM27 370.5v3.500h-3.500zM27 394.5v3.500h-3.500zM27 416.5v3.500h-3.500zM27 437.5v3.500h-3.500zM27 459.5v3.500h-3.500zM27 482.5v3.500h-3.500zM27 591.5v3.500h-3.500z" fill="#d0d0d0"/></svg>
<div class="t" style="left:10px;top:401px;font-family:'Liberation Serif',serif;font-size:19px;line-height:22px;height:22px;color:#c8c8c8">T</div>
<div class="a" style="left:0;top:0;width:1px;height:708px;background:#e0e0e0"></div>
<div class="a" style="left:953px;top:52px;width:234px;height:10px;background:linear-gradient(#3a3a3a,#2c2c2c)"></div>
<div class="a" style="left:953px;top:62px;width:234px;height:646px;background:#343434"></div>
<svg style="left:977px;top:54px" width="8" height="6" viewBox="0 0 8 6"><path d="M3.500 0L0 3l3.500 3zM7.500 0L4 3l3.500 3z" fill="#d0d0d0"/></svg>
<svg style="left:1176px;top:54px" width="8" height="6" viewBox="0 0 8 6"><path d="M0 0l3.500 3L0 6zM4 0l3.500 3L4 6z" fill="#d0d0d0"/></svg>
<div class="a" style="left:955px;top:62px;width:31px;height:33px;background:#535353"></div>
<div class="a" style="left:955px;top:96px;width:31px;height:56px;background:#535353"></div>
<div class="a" style="left:955px;top:153px;width:31px;height:555px;background:#525252"></div>
<div class="a" style="left:962px;top:66px;width:17px;height:1px;background:repeating-linear-gradient(90deg,#2e2e2e 0 1px,transparent 1px 2px)"></div>
<div class="a" style="left:962px;top:67px;width:17px;height:1px;background:repeating-linear-gradient(90deg,#707070 0 1px,transparent 1px 2px)"></div>
<div class="a" style="left:962px;top:100px;width:17px;height:1px;background:repeating-linear-gradient(90deg,#2e2e2e 0 1px,transparent 1px 2px)"></div>
<div class="a" style="left:962px;top:101px;width:17px;height:1px;background:repeating-linear-gradient(90deg,#707070 0 1px,transparent 1px 2px)"></div>
<svg style="left:963px;top:73px" width="16" height="16" viewBox="0 0 16 16"><path d="M5 1l4.500 2v5L5 10 .5 8V3z" fill="#bdbdbd" stroke="#d0d0d0" stroke-width=".8"/><path d="M.5 3L5 5l4.500-2M5 5v5" fill="none" stroke="#777" stroke-width=".8"/><rect x="11" y="1" width="3.500" height="3.500" fill="#d0d0d0"/><rect x="11" y="6" width="3.500" height="3.500" fill="#d0d0d0"/><rect x="1" y="12" width="14" height="3" fill="#d0d0d0"/><path d="M11 13l1.500 1.500 1.500-1.500z" fill="#444"/></svg>
<svg style="left:962px;top:107px" width="18" height="16" viewBox="0 0 18 16"><path d="M14 1H9.500a3 3 0 0 0 0 6H11v8M14 1v14" fill="none" stroke="#d0d0d0" stroke-width="1.500"/><path d="M9.500 1a3 3 0 0 0 0 6H11V1z" fill="#d0d0d0"/><rect x="1" y="8.500" width="5" height="5" fill="none" stroke="#d0d0d0"/><rect x="3.500" y="10.500" width="5" height="5" fill="#8a8a8a" stroke="#d0d0d0"/></svg>
<div class="t" style="left:970px;top:128px;font-size:15px;line-height:16px;height:16px;color:#d0d0d0">A</div>
<svg style="left:963px;top:136.500px" width="10" height="10" viewBox="0 0 10 10"><rect x=".5" y=".5" width="5" height="5" fill="none" stroke="#d0d0d0"/><rect x="3" y="3" width="5" height="5" fill="#8a8a8a" stroke="#d0d0d0"/></svg>
<div class="a" style="left:988px;top:62px;width:199px;height:106px;background:#535353"></div>
<div class="a" style="left:988px;top:62px;width:199px;height:14px;background:#424242;border-bottom:1px solid #383838"></div>
<div class="a" style="left:988px;top:62px;width:31px;height:15px;background:#535353;border-right:1px solid #333"></div>
<div class="t" style="left:993px;top:64px;font-size:10px;color:#f0f0f0">颜色</div>
<div class="a" style="left:1019px;top:62px;width:30px;height:14px;background:#494949;border-right:1px solid #333"></div>
<div class="t" style="left:1025px;top:64px;font-size:10px;color:#9c9c9c">色板</div>
<svg style="left:1174px;top:66px" width="10" height="7" viewBox="0 0 10 7"><path d="M0 1h3.500L1.750 3.500zM4.500 .5h5.500M4.500 3h5.500M4.500 5.500h5.500" fill="#ccc" stroke="#ccc" stroke-width="1"/></svg>
<div class="a" style="left:1001px;top:94px;width:16px;height:15px;background:#fff;border:1px solid #ddd"></div>
<div class="a" style="left:992px;top:84px;width:18px;height:18px;border:1px solid #bbb"></div>
<div class="a" style="left:994px;top:86px;width:14px;height:14px;background:#000"></div>
<div class="t" style="left:1024px;top:86px;font-size:9.300px;font-weight:bold;color:#e0e0e0">R</div>
<div class="a" style="left:1038px;top:87px;width:66px;height:5px;background:linear-gradient(90deg,#000,#ff0000);border:1px solid #2a2a2a;border-bottom-color:#777"></div>
<svg style="left:1033px;top:92px" width="9" height="8" viewBox="0 0 9 8"><path d="M4.500 0L9 5v3H0V5z" fill="#b8b8b8" stroke="#666" stroke-width=".6"/></svg>
<div class="a" style="left:1109px;top:85px;width:41px;height:16px;background:#3c3c3c;border:1px solid #4a4a4a"></div>
<div class="t" style="left:1111px;top:87px;font-size:9.300px;color:#e8e8e8">0</div>
<div class="t" style="left:1024px;top:107px;font-size:9.300px;font-weight:bold;color:#e0e0e0">G</div>
<div class="a" style="left:1038px;top:108px;width:66px;height:5px;background:linear-gradient(90deg,#000,#1fe01f);border:1px solid #2a2a2a;border-bottom-color:#777"></div>
<svg style="left:1033px;top:113px" width="9" height="8" viewBox="0 0 9 8"><path d="M4.500 0L9 5v3H0V5z" fill="#b8b8b8" stroke="#666" stroke-width=".6"/></svg>
<div class="a" style="left:1109px;top:106px;width:41px;height:16px;background:#3c3c3c;border:1px solid #4a4a4a"></div>
<div class="t" style="left:1111px;top:108px;font-size:9.300px;color:#e8e8e8">0</div>
<div class="t" style="left:1024px;top:127px;font-size:9.300px;font-weight:bold;color:#e0e0e0">B</div>
<div class="a" style="left:1038px;top:128px;width:66px;height:5px;background:linear-gradient(90deg,#000,#0000ff);border:1px solid #2a2a2a;border-bottom-color:#777"></div>
<svg style="left:1033px;top:133px" width="9" height="8" viewBox="0 0 9 8"><path d="M4.500 0L9 5v3H0V5z" fill="#b8b8b8" stroke="#666" stroke-width=".6"/></svg>
<div class="a" style="left:1109px;top:126px;width:41px;height:16px;background:#3c3c3c;border:1px solid #4a4a4a"></div>
<div class="t" style="left:1111px;top:128px;font-size:9.300px;color:#e8e8e8">0</div>
<div class="a" style="left:993px;top:152px;width:158px;height:12px;background:linear-gradient(90deg,#f00 0%,#ff0 16%,#0f0 33%,#0ff 50%,#00f 66%,#f0f 83%,#f00 100%)"></div>
<div class="a" style="left:993px;top:152px;width:158px;height:12px;background:linear-gradient(180deg,rgba(255,255,255,.95) 0%,rgba(255,255,255,0) 38%,rgba(0,0,0,0) 42%,rgba(0,0,0,.7) 80%,rgba(0,0,0,1) 100%)"></div>
<div class="a" style="left:1151px;top:152px;width:6px;height:6px;background:#fff"></div><div class="a" style="left:1151px;top:158px;width:6px;height:6px;background:#000"></div>
<div class="a" style="left:988px;top:171px;width:199px;height:105px;background:#535353"></div>
<div class="a" style="left:988px;top:171px;width:199px;height:14px;background:#424242;border-bottom:1px solid #383838"></div>
<div class="a" style="left:988px;top:171px;width:31px;height:15px;background:#535353;border-right:1px solid #333"></div>
<div class="t" style="left:993px;top:173px;font-size:10px;color:#f0f0f0">调整</div>
<div class="a" style="left:1019px;top:171px;width:30px;height:14px;background:#494949;border-right:1px solid #333"></div>
<div class="t" style="left:1025px;top:173px;font-size:10px;color:#9c9c9c">样式</div>
<svg style="left:1174px;top:175px" width="10" height="7" viewBox="0 0 10 7"><path d="M0 1h3.500L1.750 3.500zM4.500 .5h5.500M4.500 3h5.500M4.500 5.500h5.500" fill="#ccc" stroke="#ccc" stroke-width="1"/></svg>
<div class="t" style="left:996px;top:190px;font-size:10px;color:#f0f0f0">添加调整</div>
<svg style="left:0;top:0" width="1187" height="708" viewBox="0 0 1187 708"><defs><linearGradient id="adjg" x1="0" y1="0" x2="1" y2="1"><stop offset="0" stop-color="#4a4a4a"/><stop offset="1" stop-color="#b8b8b8"/></linearGradient></defs><g transform="translate(1028,209)"><circle cx="7" cy="7.500" r="3" fill="none" stroke="#cdcdcd" stroke-width="1.200"/><path d="M7 4.500a3 3 0 0 1 0 6z" fill="#cdcdcd"/><path d="M7 0v2.500M7 12.500V15M0 7.500h2.500M11.500 7.500H14M2 2.500l1.800 1.800M10.200 10.700L12 12.500M2 12.500l1.800-1.800M10.200 4.300L12 2.500" stroke="#cdcdcd" stroke-width="1.200"/></g><g transform="translate(1048,210)"><path d="M0 12V9l1.500-3 1 2 1.500-6 1.500 5 1.500-7 1.500 6 1.500-4 1.500 5 1-3 1.500 3v4z" fill="#cdcdcd"/><path d="M0 12.500h15" stroke="#cdcdcd"/></g><g transform="translate(1068,210)"><rect x=".5" y=".5" width="13" height="11" fill="#777" stroke="#cdcdcd"/><path d="M.5 4h13M.5 8h13M5 .5v11M9.500 .5v11" stroke="#999" stroke-width=".6"/><path d="M1 11C6 11 8 1 13 1" fill="none" stroke="#eee" stroke-width="1.300"/></g><g transform="translate(1088,210)"><rect x=".5" y=".5" width="13" height="11" fill="#6c6c6c" stroke="#cdcdcd"/><path d="M.5 11.500L13.500 .5V11.500z" fill="#2c2c2c"/><path d="M2.500 3.500h4M4.500 1.500v4M8 9h4" stroke="#eee" stroke-width="1.100"/></g><g transform="translate(1108,210)"><path d="M0 0h14L7 13z" fill="#8a8a8a" stroke="#cdcdcd" stroke-width="1.300"/></g><g transform="translate(1019,233)"><rect x=".5" y=".5" width="13" height="10.500" fill="#6a6a6a" stroke="#cdcdcd"/><rect x="1" y="1" width="4" height="5" fill="#e0e0e0"/><rect x="5" y="1" width="4" height="5" fill="#aaa"/><rect x="9" y="1" width="4" height="5" fill="#ddd"/><rect x="1" y="7" width="12" height="3.500" fill="#999"/></g><g transform="translate(1038,232)"><path d="M7 0v11M2 3h10M4 12.500h6" stroke="#cdcdcd" stroke-width="1.300" fill="none"/><path d="M0 8.500h4.500L2.250 3.500zM9.500 8.500H14L11.750 3.500z" fill="none" stroke="#cdcdcd"/><path d="M0 8.500a2.250 2.250 0 0 0 4.500 0zM9.500 8.500a2.250 2.250 0 0 0 4.500 0z" fill="#cdcdcd"/></g><g transform="translate(1058,233)"><rect x=".5" y=".5" width="13" height="10.500" fill="#2e2e2e" stroke="#cdcdcd"/><rect x="7" y="1" width="6.500" height="9.500" fill="#e4e4e4"/></g><g transform="translate(1077,232)"><path d="M0 3h2.500l1-1.500h4l1 1.500H11v7H0z" fill="#cdcdcd"/><circle cx="5.500" cy="6.500" r="2.500" fill="#555"/><circle cx="10.500" cy="9" r="3.800" fill="#8a8a8a" stroke="#cdcdcd" stroke-width="1.100"/></g><g transform="translate(1098,232)"><circle cx="6.500" cy="4.300" r="3.800" fill="#cdcdcd"/><circle cx="3.800" cy="8.800" r="3.800" fill="#e6e6e6"/><circle cx="9.200" cy="8.800" r="3.800" fill="#c0c0c0"/><path d="M6.500 7.500l-2-2.200h4z" fill="#555"/></g><g transform="translate(1118,233)"><rect x=".5" y=".5" width="13" height="10.500" fill="#9a9a9a" stroke="#cdcdcd"/><path d="M5 .5v10.500M9.500 .5v10.500M.5 4h13M.5 7.500h13" stroke="#4a4a4a" stroke-width="1"/></g><g transform="translate(1029,256)"><rect x=".5" y=".5" width="13" height="10" fill="url(#adjg)" stroke="#a0a0a0"/><path d="M1 10L13 1" stroke="#eee" stroke-width="1.500"/></g><g transform="translate(1048,256)"><rect x=".5" y=".5" width="13" height="10" fill="url(#adjg)" stroke="#a0a0a0"/></g><g transform="translate(1068,256)"><rect x=".5" y=".5" width="13" height="10" fill="url(#adjg)" stroke="#a0a0a0"/><path d="M1 10L13 1" stroke="#eee" stroke-width="1.500"/></g><g transform="translate(1088,256)"><rect x=".5" y=".5" width="13" height="10" fill="url(#adjg)" stroke="#a0a0a0"/><path d="M1 1l6 6 6-6" fill="none" stroke="#eee" stroke-width="1.200"/></g><g transform="translate(1108,256)"><rect x=".5" y=".5" width="13" height="10" fill="url(#adjg)" stroke="#a0a0a0"/></g></svg>
<div class="a" style="left:988px;top:279px;width:199px;height:429px;background:#535353"></div>
<div class="a" style="left:988px;top:279px;width:199px;height:14px;background:#424242;border-bottom:1px solid #383838"></div>
<div class="a" style="left:988px;top:279px;width:31px;height:15px;background:#535353;border-right:1px solid #333"></div>
<div class="t" style="left:993px;top:281px;font-size:10px;color:#f0f0f0">图层</div>
<div class="a" style="left:1019px;top:279px;width:31px;height:14px;background:#494949;border-right:1px solid #333"></div>
<div class="t" style="left:1025px;top:281px;font-size:10px;color:#9c9c9c">通道</div>
<div class="a" style="left:1050px;top:279px;width:32px;height:14px;background:#494949;border-right:1px solid #333"></div>
<div class="t" style="left:1056px;top:281px;font-size:10px;color:#9c9c9c">路径</div>
<svg style="left:1174px;top:283px" width="10" height="7" viewBox="0 0 10 7"><path d="M0 1h3.500L1.750 3.500zM4.500 .5h5.500M4.500 3h5.500M4.500 5.500h5.500" fill="#ccc" stroke="#ccc" stroke-width="1"/></svg>
<div class="a dd" style="left:993px;top:297px;width:56px;height:16px"></div>
<svg style="left:997px;top:301px" width="8" height="8" viewBox="0 0 8 8"><circle cx="4.800" cy="3.200" r="2.500" fill="none" stroke="#ddd" stroke-width="1.100"/><path d="M3 5L.5 7.500" stroke="#ddd" stroke-width="1.200"/></svg>
<div class="t" style="left:1010px;top:299px;font-size:10px;color:#f0f0f0">类型</div>
<svg style="left:1041px;top:301px" width="5" height="8" viewBox="0 0 6 9"><path d="M0 3.200L3 0l3 3.200zM0 5.800L3 9l3-3.200z" fill="#e0e0e0"/></svg>
<svg style="left:0;top:0" width="1187" height="708" viewBox="0 0 1187 708"><g transform="translate(1067,300)"><rect x=".5" y=".5" width="10" height="8" fill="#777" stroke="#cdcdcd"/><path d="M1.500 7.500l2.500-3 2 2 1.500-1.500 2 2.500z" fill="#cdcdcd"/><circle cx="8" cy="3" r="1" fill="#cdcdcd"/></g><g transform="translate(1087,300)"><circle cx="5" cy="4.500" r="4.300" fill="#7a7a7a" stroke="#cdcdcd"/><path d="M2 7.500A4.300 4.300 0 0 1 8 1.500z" fill="#cdcdcd"/></g><g transform="translate(1127,300)"><rect x="1.500" y="1.500" width="8" height="6.500" fill="none" stroke="#cdcdcd"/><path d="M0 0h3v3H0zM8 0h3v3H8zM0 6.500h3v3H0zM8 6.500h3v3H8z" fill="#cdcdcd"/></g><g transform="translate(1147,299)"><path d="M3.500 .5h4l2.500 2.500v7.500H3.500z" fill="#8a8a8a" stroke="#cdcdcd"/><rect x=".5" y="5.500" width="5" height="5" fill="#aaa" stroke="#cdcdcd"/></g><g transform="translate(1025,346)"><rect x="0" y="0" width="9" height="9" fill="#cfcfcf"/><path d="M0 0h3v3H0zM6 0h3v3H6zM3 3h3v3H3zM0 6h3v3H0zM6 6h3v3H6z" fill="#777"/></g><g transform="translate(1041,344)"><path d="M12.500 .5L6 7.500" stroke="#cdcdcd" stroke-width="1.600"/><path d="M6.500 7c-1.800-.8-3.200 0-3.700 1.500c-.3 1.200-1.300 2-2.600 2c2.500 1.300 5.800 1 7-1.500z" fill="#cdcdcd"/></g><g transform="translate(1060,344)"><path d="M5.500 1.500v8M1.500 5.500h8" stroke="#cdcdcd" stroke-width="1.100"/><path d="M5.500 0l2 2.500h-4zM5.500 11l2-2.500h-4zM0 5.500l2.500-2v4zM11 5.500l-2.500-2v4z" fill="#cdcdcd"/></g><g transform="translate(1080,344)"><path d="M2 5V3.500a2.500 2.500 0 0 1 5 0V5" fill="none" stroke="#cdcdcd" stroke-width="1.400"/><rect x=".5" y="5" width="8" height="6" fill="#cdcdcd"/><rect x="4" y="7" width="1.200" height="2.500" fill="#555"/></g></svg>
<div class="t" style="left:1107px;top:298px;font-family:'Liberation Serif',serif;font-weight:bold;font-size:13px;line-height:14px;height:14px;color:#d0d0d0">T</div>
<div class="a" style="left:1175px;top:298px;width:5px;height:13px;background:#3a3a3a;border:1px solid #2a2a2a"></div><div class="a" style="left:1175px;top:298px;width:5px;height:6px;background:#8a8a8a"></div>
<div class="a" style="left:988px;top:315px;width:192px;height:1px;background:#434343"></div>
<div class="a dd" style="left:993px;top:320px;width:90px;height:16px"></div>
<div class="t" style="left:999px;top:322px;font-size:10px;color:#f0f0f0">正常</div>
<svg style="left:1074px;top:324px" width="5" height="8" viewBox="0 0 6 9"><path d="M0 3.200L3 0l3 3.200zM0 5.800L3 9l3-3.200z" fill="#e0e0e0"/></svg>
<div class="t" style="left:1090px;top:322px;font-size:10px;color:#f0f0f0">不透明度:</div>
<div class="t" style="left:994px;top:344px;font-size:10px;color:#f0f0f0">锁定:</div>
<div class="t" style="left:1110px;top:345px;font-size:10px;color:#f0f0f0">填充:</div>
<div class="a" style="left:1137px;top:320px;width:29px;height:16px;background:#3b3b3b;border:1px solid #333"></div>
<div class="t" style="left:1140px;top:322px;font-size:9.500px;color:#f0f0f0;letter-spacing:-.3px">100%</div>
<div class="a" style="left:1166px;top:320px;width:14px;height:16px;background:linear-gradient(#6e6e6e,#5a5a5a);border:1px solid #333"></div>
<svg style="left:1170.500px;top:326.5px" width="5" height="3.300" viewBox="0 0 6 4"><path d="M0 0h6L3 4z" fill="#eee"/></svg>
<div class="a" style="left:1137px;top:343px;width:29px;height:16px;background:#3b3b3b;border:1px solid #333"></div>
<div class="t" style="left:1140px;top:345px;font-size:9.500px;color:#f0f0f0;letter-spacing:-.3px">100%</div>
<div class="a" style="left:1166px;top:343px;width:14px;height:16px;background:linear-gradient(#6e6e6e,#5a5a5a);border:1px solid #333"></div>
<svg style="left:1170.500px;top:349.5px" width="5" height="3.300" viewBox="0 0 6 4"><path d="M0 0h6L3 4z" fill="#eee"/></svg>
<div class="a" style="left:988px;top:363px;width:187px;height:330px;background:#484848"></div>
<div class="a" style="left:988px;top:363px;width:187px;height:1px;background:#3a3a3a"></div>
<div class="a" style="left:1013px;top:364px;width:162px;height:32px;background:#56657b"></div>
<div class="a" style="left:988px;top:364px;width:25px;height:64px;background:#4c4c4c;border-right:1px solid #3c3c3c"></div>
<div class="a" style="left:988px;top:396px;width:187px;height:1px;background:#3c3c3c"></div>
<div class="a" style="left:988px;top:428px;width:187px;height:1px;background:#3c3c3c"></div>
<svg style="left:995px;top:376px" width="10" height="7.300" viewBox="0 0 11 8"><path d="M0 4.500C2.500 .8 8.500 .8 11 4.500C8.500 7.800 2.500 7.800 0 4.500z" fill="#b4b4b4"/><circle cx="5.500" cy="4" r="2.100" fill="#3c3c3c"/><circle cx="4.800" cy="3.300" r=".7" fill="#ddd"/></svg>
<svg style="left:995px;top:408px" width="10" height="7.300" viewBox="0 0 11 8"><path d="M0 4.500C2.500 .8 8.500 .8 11 4.500C8.500 7.800 2.500 7.800 0 4.500z" fill="#b4b4b4"/><circle cx="5.500" cy="4" r="2.100" fill="#3c3c3c"/><circle cx="4.800" cy="3.300" r=".7" fill="#ddd"/></svg>
<div class="a" style="left:1016px;top:366px;width:23px;height:27px;background:#2b2b2b"></div><div class="a" style="left:1017px;top:367px;width:21px;height:25px;background:#fff repeating-conic-gradient(#cbcbcb 0 25%,#fff 0 50%) 0 0/10px 10px"></div>
<div class="a" style="left:1017px;top:399px;width:21px;height:26px;background:#fff repeating-conic-gradient(#cbcbcb 0 25%,#fff 0 50%) 0 0/10px 10px"></div>
<svg style="left:1015px;top:365px" width="26" height="30" viewBox="0 0 26 30"><circle cx="12.500" cy="8" r="4" fill="#f9c3da" opacity=".9"/><circle cx="12.500" cy="8" r="1.200" fill="#e58cc0"/><ellipse cx="8" cy="13" rx="4" ry="2" fill="#cfe486" opacity=".9"/><ellipse cx="18" cy="14" rx="4" ry="2" fill="#cfe486" opacity=".9"/><ellipse cx="7" cy="22" rx="3.500" ry="2.500" fill="#cfe486" opacity=".9" transform="rotate(-40 7 22)"/><ellipse cx="17" cy="19" rx="1.800" ry="3" fill="#cfe486" opacity=".9"/><circle cx="9" cy="17" r="1.500" fill="#f7b6d3"/><path d="M12.500 12c-1 6 3 9 2 15" stroke="#c4c870" fill="none"/><path d="M.5 9V.5H8M16 .5h8.500V9M24.500 20v8.500H16M8 28.500H.5V20" fill="none" stroke="#e6e6e6" stroke-width="1"/></svg>
<div class="t" style="left:1046px;top:375px;font-size:10px;color:#f4f4f4">图层 2</div>
<div class="t" style="left:1046px;top:407px;font-size:10px;color:#f0f0f0">图层 1</div>
<div class="a" style="left:1174px;top:363px;width:13px;height:330px;background:#454545;border-left:1px solid #3e3e3e"></div>
<div class="a" style="left:988px;top:693px;width:199px;height:14px;background:#535353;border-top:1px solid #3a3a3a"></div>
<svg style="left:0;top:0" width="1187" height="708" viewBox="0 0 1187 708"><g transform="translate(1019,696)"><rect x=".6" y="1.600" width="5" height="4" rx="2" fill="none" stroke="#c6c6c6" stroke-width="1.100"/><rect x="5.400" y="1.600" width="5" height="4" rx="2" fill="none" stroke="#c6c6c6" stroke-width="1.100"/><path d="M3.500 3.600h4" stroke="#c6c6c6" stroke-width="1.100"/></g><g transform="translate(1065,695)"><rect x="0" y="1" width="11" height="8" fill="#c6c6c6"/><circle cx="5.500" cy="5" r="2.300" fill="#444"/></g><g transform="translate(1088,695)"><circle cx="5" cy="5" r="4.300" fill="#c6c6c6"/><path d="M2 8L8 2A4.300 4.300 0 0 1 2 8z" fill="#555"/><path d="M11.500 8h3l-1.500 2z" fill="#c6c6c6"/></g><g transform="translate(1109,695)"><path d="M0 9V1h4l1 1.500h6V9z" fill="#c6c6c6"/></g><g transform="translate(1133,695)"><path d="M0 0h9v9H3.500V5.500H0z" fill="#c6c6c6"/><path d="M.5 6.500l2.500 2.500" stroke="#c6c6c6"/></g><g transform="translate(1154,695)"><path d="M1 3h8l-.8 7H1.800z" fill="none" stroke="#c6c6c6" stroke-width="1.100"/><path d="M0 2.500h10M3.500 2V.8h3V2M3.500 4.500v4M5 4.500v4M6.500 4.500v4" stroke="#c6c6c6" stroke-width="1" fill="none"/></g></svg>
<div class="t" style="left:1043px;top:693px;font-family:'Liberation Serif',serif;font-style:italic;font-size:13px;line-height:13px;height:13px;color:#c6c6c6">fx<span style="font-size:8px">.</span></div>
<div class="a" style="left:1185px;top:52px;width:2px;height:656px;background:#585858"></div>
<div class="a" style="left:1180px;top:240px;width:7px;height:44px;background:#2a3650"></div>
<svg style="left:1000px;top:640px" width="48" height="50" viewBox="0 0 48 50"><ellipse cx="24" cy="24" rx="20" ry="22.500" transform="rotate(18 24 24)" fill="#8b8b8b"/><ellipse cx="26.800" cy="21.500" rx="8.800" ry="16.200" transform="rotate(14 26.800 21.500)" fill="#484848"/><path d="M3.500 27C.5 34 2.500 42.500 10 45.800c8 3.500 18 1.500 25-4c-8 3.500-19 4-25-1.500c-4.500-4-6-8-6.500-13.300z" fill="#9d9d9d"/></svg>
<div class="t" style="left:1050px;top:645px;font-size:21.500px;line-height:24px;height:24px;color:#939393;letter-spacing:1.700px;font-weight:300">当下软件园</div>
<div class="t" style="left:1050.500px;top:671.500px;font-size:13.700px;line-height:16px;height:16px;color:#909090">www.downxia.com</div>
<div class="a" style="left:972px;top:261px;width:212px;height:174px;border:4px solid #fe0000"></div>
<div class="a" style="left:0;top:707px;width:1187px;height:1px;background:#dcdcdc"></div>
</body>
</html>
